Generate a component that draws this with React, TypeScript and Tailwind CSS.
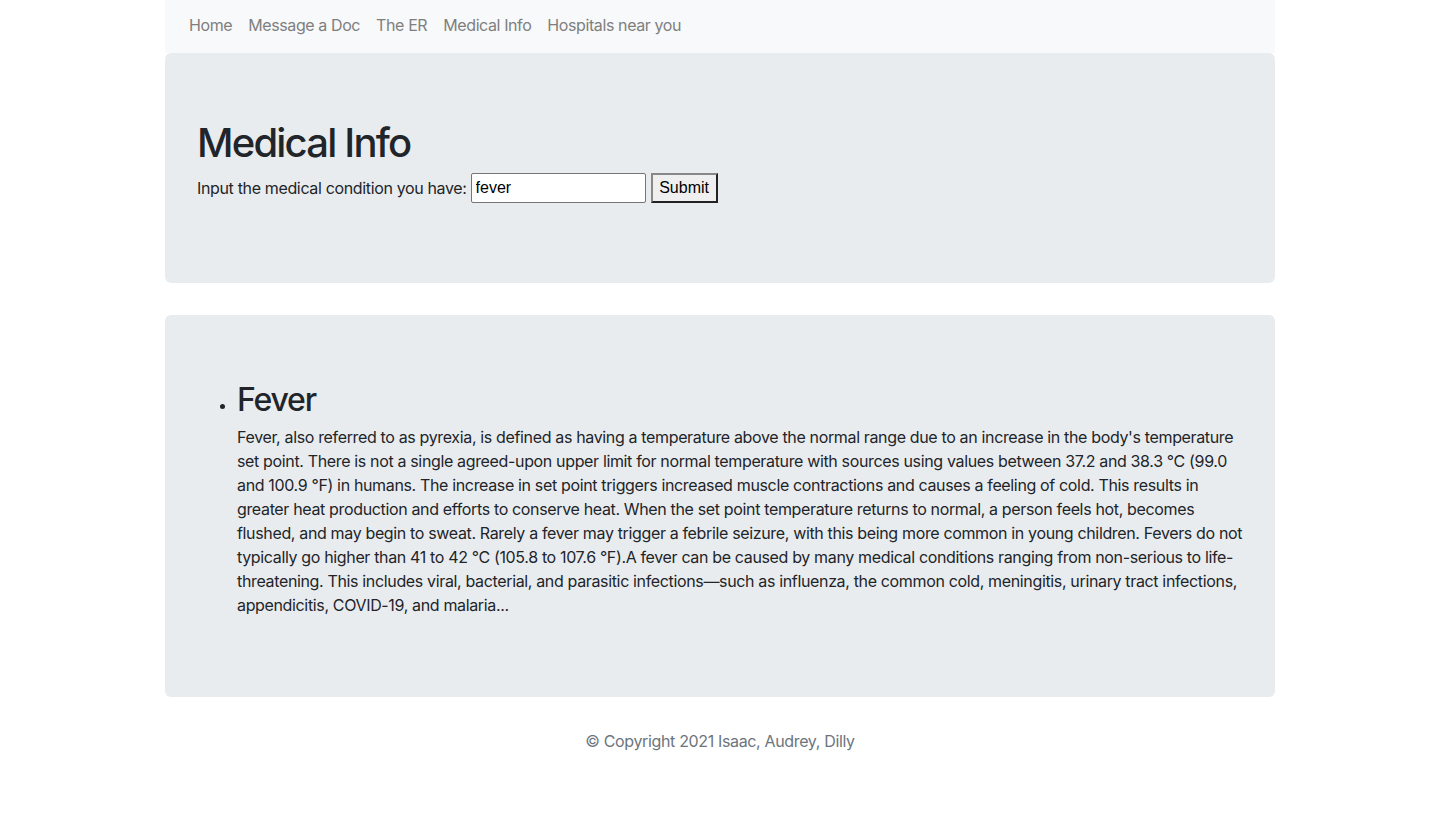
import React from "react";

const links = ["Home", "Message a Doc", "The ER", "Medical Info", "Hospitals near you"];

const feverText =
  "Fever, also referred to as pyrexia, is defined as having a temperature above the normal range due to an increase in the body's temperature set point. There is not a single agreed-upon upper limit for normal temperature with sources using values between 37.2 and 38.3 °C (99.0 and 100.9 °F) in humans. The increase in set point triggers increased muscle contractions and causes a feeling of cold. This results in greater heat production and efforts to conserve heat. When the set point temperature returns to normal, a person feels hot, becomes flushed, and may begin to sweat. Rarely a fever may trigger a febrile seizure, with this being more common in young children. Fevers do not typically go higher than 41 to 42 °C (105.8 to 107.6 °F).A fever can be caused by many medical conditions ranging from non-serious to life-threatening. This includes viral, bacterial, and parasitic infections—such as influenza, the common cold, meningitis, urinary tract infections, appendicitis, COVID-19, and malaria...";

export default function App() {
  return (
    <div className="min-h-screen bg-white text-[#212529] text-base leading-6 tracking-[-0.35px] font-['Inter','Noto_Sans',sans-serif]">
      <div className="mx-auto w-[1110px]">
        {/* navbar */}
        <nav className="flex h-[53px] items-center bg-[#f8f9fa] px-4 pb-[3px] tracking-[-0.4px]">
          {links.map((l) => (
            <a key={l} href="#" className="px-2 text-[#7f7f7f] hover:text-[#555]">
              {l}
            </a>
          ))}
        </nav>

        {/* search jumbotron */}
        <section className="mb-8 rounded-md bg-[#e9ecef] px-8 py-16">
          <h1 className="mb-2 pt-[3px] text-[40px] font-medium leading-[45px] tracking-[-1.8px]">Medical Info</h1>
          <form className="mb-4 flex items-center" onSubmit={(e) => e.preventDefault()}>
            <label className="mr-[4px]">Input the medical condition you have:</label>
            <input
              defaultValue="fever"
              className="h-[30px] w-[175px] rounded-[2px] border border-[#767676] bg-white px-[4px] text-black tracking-normal font-['Liberation_Sans',sans-serif] outline-none"
            />
            <button
              type="submit"
              className="ml-[5px] h-[30px] w-[67px] border-2 border-t-[#888] border-l-[#888] border-r-[#222] border-b-[#222] bg-[#efefef] text-black tracking-normal font-['Liberation_Sans',sans-serif]"
            >
              Submit
            </button>
          </form>
        </section>

        {/* results jumbotron */}
        <section className="mb-8 rounded-md bg-[#e9ecef] px-8 py-16">
          <ul className="list-disc pl-10">
            <li className="pb-4">
              <h2 className="mb-2 pt-[3px] text-[32px] font-medium leading-[35px] tracking-[-1.2px]">Fever</h2>
              <p>{feverText}</p>
            </li>
          </ul>
        </section>

        <footer className="text-center text-[#6c757d]">© Copyright 2021 Isaac, Audrey, Dilly</footer>
      </div>
    </div>
  );
}
